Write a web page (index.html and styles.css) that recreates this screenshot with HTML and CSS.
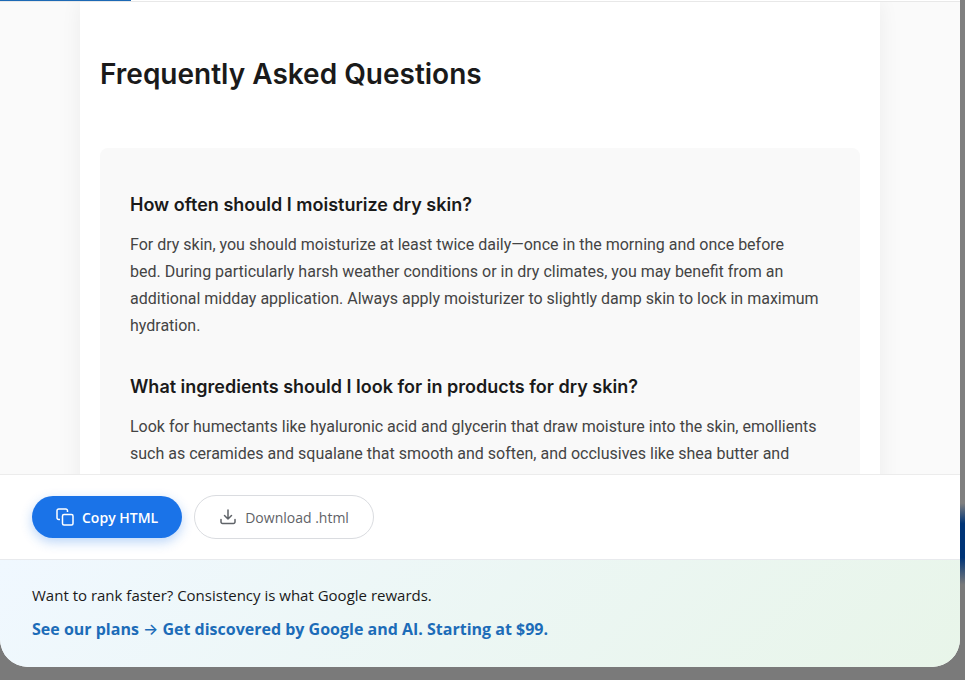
FILE: index.html
```html
<!DOCTYPE html>
<html lang="en">
<head>
    <meta charset="UTF-8">
    <meta name="viewport" content="width=device-width, initial-scale=1.0">
    <title>Article Preview</title>
    <link rel="stylesheet" href="styles.css">
</head>
<body>
    <div class="modal">
        <div class="progress"></div>
        <div class="preview">
            <article class="article">
                <h2>Frequently Asked Questions</h2>
                <section class="faq">
                    <h3>How often should I moisturize dry skin?</h3>
                    <p>For dry skin, you should moisturize at least twice daily—once in the morning and once before<br>
                    bed. During particularly harsh weather conditions or in dry climates, you may benefit from an<br>
                    additional midday application. Always apply moisturizer to slightly damp skin to lock in maximum<br>
                    hydration.</p>
                    <h3>What ingredients should I look for in products for dry skin?</h3>
                    <p>Look for humectants like hyaluronic acid and glycerin that draw moisture into the skin, emollients<br>
                    such as ceramides and squalane that smooth and soften, and occlusives like shea butter and<br>
                    petrolatum that seal in hydration and help keep the skin barrier healthy.</p>
                </section>
            </article>
        </div>

        <div class="actions">
            <button class="btn copy" type="button">
                <svg viewBox="0 0 18 18" width="18" height="18" fill="none" stroke="currentColor" stroke-width="1.5" stroke-linejoin="round">
                    <path d="M4 11.5H2.7A1.7 1.7 0 0 1 1 9.8V2.7A1.7 1.7 0 0 1 2.7 1H9.8A1.7 1.7 0 0 1 11.5 2.7V4"/>
                    <rect x="6.5" y="6.5" width="10.5" height="10.5" rx="1.5"/>
                </svg>
                Copy HTML
            </button>
            <button class="btn download" type="button">
                <svg viewBox="0 0 18 18" width="18" height="18" fill="none" stroke="currentColor" stroke-width="1.5" stroke-linecap="round" stroke-linejoin="round">
                    <path d="M2 11.5V14A1.5 1.5 0 0 0 3.5 15.5H14.5A1.5 1.5 0 0 0 16 14V11.5M9 2V11M5.5 7.5L9 11L12.5 7.5"/>
                </svg>
                Download .html
            </button>
        </div>

        <div class="promo">
            <p>Want to rank faster? Consistency is what Google rewards.</p>
            <a href="#plans">See our plans <span class="arrow">→</span> Get discovered by Google and AI. Starting at $99.</a>
        </div>
    </div>
</body>
</html>
```

FILE: styles.css
```css
*{
    margin:0;
    padding:0;
    box-sizing: border-box;
}
body{
    height:100vh;
    padding:0 5px 13px 0;
    overflow:hidden;
    font-family: "Open Sans", sans-serif;
    background:linear-gradient(#808080 74%, #003476 77%, #003476 82%, #7a7a7a 86%);
}
.modal{
    height:100%;
    display: flex;
    flex-direction: column;
    background:#fff;
    border-radius: 0 0 28px 28px;
    overflow:hidden;
}
.progress{
    width:131px;
    height:1px;
    background:#1c69b5;
}
.preview{
    flex:1;
    min-height:0;
    overflow:hidden;
    background:#fafafa;
    border-top:1px solid #e8e8e8;
}
.article{
    max-width:800px;
    margin:0 auto;
    padding:48px 20px;
    background:#fff;
    box-shadow: 0 0 20px rgba(0,0,0,0.06);
    font-family: Inter, sans-serif;
}
.article h2{
    margin-bottom:50px;
    font-size:28px;
    line-height:48px;
    font-weight:600;
    color:#1a1a1a;
}
.faq{
    padding:40px 30px;
    background:#f9f9f9;
    border-radius: 8px;
}
.faq h3{
    margin-bottom:9px;
    font-size:18px;
    line-height:34px;
    font-weight:600;
    color:#1a1a1a;
}
.faq p{
    margin-bottom:31px;
    font-family: Roboto, sans-serif;
    font-size:16px;
    line-height:27px;
    color:#444;
}
.actions{
    display: flex;
    align-items: center;
    gap:12px;
    padding:20px 32px;
    background:#fff;
    border-top:1px solid #ececec;
}
.btn{
    display: flex;
    align-items: center;
    gap:8px;
    padding:0 24px;
    height:42px;
    border:0;
    border-radius: 22px;
    font-family: "Open Sans", sans-serif;
    font-size:14px;
}
.copy{
    color:#fff;
    background:#1a73e8;
    font-weight:600;
    box-shadow: 0 4px 12px rgba(26,115,232,0.3);
}
.download{
    height:44px;
    color:#5f6368;
    background:#fff;
    border:1px solid #dadce0;
    font-weight:500;
}
.promo{
    display: flex;
    flex-direction: column;
    align-items: flex-start;
    gap:10px;
    padding:23px 32px 26px;
    background:linear-gradient(135deg, #f0f8ff, #e8f5e9);
    border-top:1px solid #e8eaed;
}
.promo p{
    font-size:15px;
    line-height:24px;
    color:#1a1a1a;
}
.promo a{
    font-size:16px;
    line-height:24px;
    font-weight:700;
    color:#1c6cb8;
    text-decoration: none;
}
.arrow{
    font-family: Inter, sans-serif;
    font-weight:500;
}
```
